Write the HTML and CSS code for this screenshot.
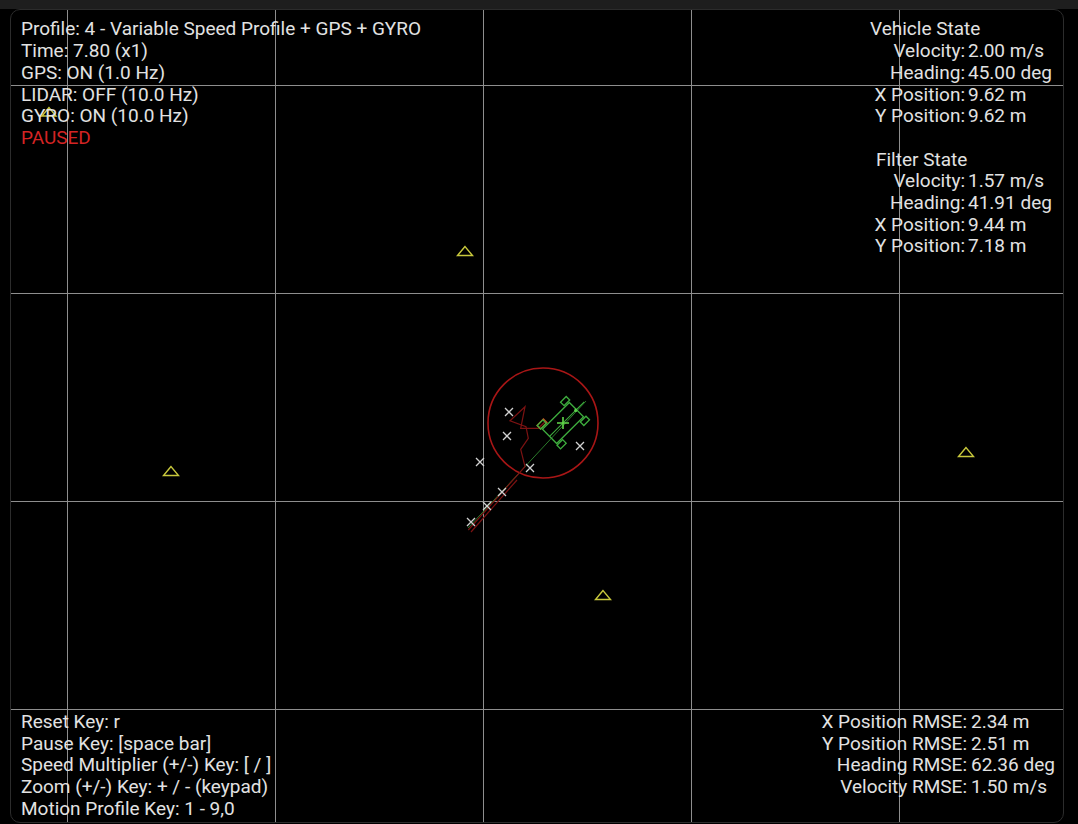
FILE: index.html
```html
<!DOCTYPE html>
<html>
<head>
<meta charset="utf-8">
<link rel="stylesheet" href="styles.css">
</head>
<body>
<div class="topbar"></div>
<div class="panel">
  <svg class="scene" width="1078" height="824" viewBox="0 0 1078 824">
    <g class="grid">
      <line x1="67.5" y1="0" x2="67.5" y2="824"/>
      <line x1="275.5" y1="0" x2="275.5" y2="824"/>
      <line x1="483.5" y1="0" x2="483.5" y2="824"/>
      <line x1="691.5" y1="0" x2="691.5" y2="824"/>
      <line x1="899.5" y1="0" x2="899.5" y2="824"/>
      <line x1="0" y1="85.5" x2="1078" y2="85.5"/>
      <line x1="0" y1="293.5" x2="1078" y2="293.5"/>
      <line x1="0" y1="501.5" x2="1078" y2="501.5"/>
      <line x1="0" y1="709.5" x2="1078" y2="709.5"/>
    </g>
    <g class="landmarks">
      <polygon points="49,107.5 42,116 56,116"/>
      <polygon points="465,246.5 457.5,255.5 472.5,255.5"/>
      <polygon points="171,466.5 163.5,475.5 178.5,475.5"/>
      <polygon points="966,447.5 958.5,456.5 973.5,456.5"/>
      <polygon points="603,590.5 595.5,599.5 610.5,599.5"/>
    </g>
    <circle class="uncert" cx="543" cy="423" r="55"/>
    <line class="path-green" x1="468" y1="528" x2="586" y2="401"/>
    <polyline class="path-red" points="468.3,530 525,466.7 520.7,449.3 528.3,438.3 526,426.7 510,420.7 525,406.7 520.7,428.3 538.3,428.3 545,421.7"/>
    <polyline class="path-red" points="471,532 517,480"/>
    <g class="gps">
      <path d="M505,408 l8,8 M513,408 l-8,8"/>
      <path d="M503,432 l8,8 M511,432 l-8,8"/>
      <path d="M476,458 l8,8 M484,458 l-8,8"/>
      <path d="M526,464 l8,8 M534,464 l-8,8"/>
      <path d="M576,442 l8,8 M584,442 l-8,8"/>
      <path d="M498,488 l8,8 M506,488 l-8,8"/>
      <path d="M483,502 l8,8 M491,502 l-8,8"/>
      <path d="M467,518 l8,8 M475,518 l-8,8"/>
    </g>
    <g transform="translate(542,424) rotate(-45)">
      <rect class="filter-car" x="-4.5" y="-2.5" width="9" height="5"/>
    </g>
    <g class="car" transform="translate(563,423) rotate(-45)">
      <rect x="-19" y="-10" width="38" height="20"/>
      <rect x="13" y="-16.5" width="8" height="5"/>
      <rect x="13" y="11.5" width="8" height="5"/>
      <rect x="-20" y="-16.5" width="8" height="5"/>
      <rect x="-20" y="11.5" width="8" height="5"/>
      <line class="axis" x1="-19" y1="0" x2="30" y2="0"/>
      <circle class="dot" cx="18" cy="0" r="1.6"/>
    </g>
    <path class="cross" d="M557,423 h12 M563,417 v12"/>
  </svg>

  <div class="overlay">
    <div class="row top">
      <div class="info">
        <div>Profile: 4 - Variable Speed Profile + GPS + GYRO</div>
        <div>Time: 7.80 (x1)</div>
        <div>GPS: ON (1.0 Hz)</div>
        <div>LIDAR: OFF (10.0 Hz)</div>
        <div>GYRO: ON (10.0 Hz)</div>
        <div class="paused">PAUSED</div>
      </div>
      <div class="state">
        <div class="head">Vehicle State</div>
        <div class="lbl">Velocity:</div><div class="val">2.00 m/s</div>
        <div class="lbl">Heading:</div><div class="val">45.00 deg</div>
        <div class="lbl">X Position:</div><div class="val">9.62 m</div>
        <div class="lbl">Y Position:</div><div class="val">9.62 m</div>
        <div class="head gap">Filter State</div>
        <div class="lbl">Velocity:</div><div class="val">1.57 m/s</div>
        <div class="lbl">Heading:</div><div class="val">41.91 deg</div>
        <div class="lbl">X Position:</div><div class="val">9.44 m</div>
        <div class="lbl">Y Position:</div><div class="val">7.18 m</div>
      </div>
    </div>
    <div class="row bottom">
      <div class="info">
        <div>Reset Key: r</div>
        <div>Pause Key: [space bar]</div>
        <div>Speed Multiplier (+/-) Key: [ / ]</div>
        <div>Zoom (+/-) Key: + / - (keypad)</div>
        <div>Motion Profile Key: 1 - 9,0</div>
      </div>
      <div class="rmse">
        <div class="lbl">X Position RMSE:</div><div class="val">2.34 m</div>
        <div class="lbl">Y Position RMSE:</div><div class="val">2.51 m</div>
        <div class="lbl">Heading RMSE:</div><div class="val">62.36 deg</div>
        <div class="lbl">Velocity RMSE:</div><div class="val">1.50 m/s</div>
      </div>
    </div>
  </div>
</div>
</body>
</html>
```

FILE: styles.css
```css
html, body {
  margin: 0;
  padding: 0;
  background: #000;
  width: 1078px;
  height: 824px;
  overflow: hidden;
}

.topbar {
  height: 9px;
  background: #1e1e1e;
}

.panel {
  position: relative;
  margin-left: 10px;
  width: 1052px;
  height: 812px;
  border: 1px solid #2c2c2c;
  border-radius: 10px;
  overflow: hidden;
  background: #000;
}

.scene {
  position: absolute;
  left: -11px;
  top: -10px;
  display: block;
}

.grid line {
  stroke: #8e8e8e;
  stroke-width: 1;
}

.landmarks polygon {
  fill: none;
  stroke: #c8c83c;
  stroke-width: 1.4;
  stroke-linejoin: miter;
}

.uncert {
  fill: none;
  stroke: #a81616;
  stroke-width: 1.6;
}

.path-green {
  stroke: #2a7a2a;
  stroke-width: 1;
}

.path-red {
  fill: none;
  stroke: #7c1212;
  stroke-width: 1.2;
}

.gps path {
  stroke: #d2d2d2;
  stroke-width: 1.3;
  fill: none;
}

.filter-car {
  fill: none;
  stroke: #c4501e;
  stroke-width: 1.4;
}

.car rect {
  fill: none;
  stroke: #3eae3e;
  stroke-width: 1.3;
}

.car .axis {
  stroke: #3eae3e;
  stroke-width: 1;
}

.car .dot {
  fill: #5ccf4c;
}

.cross {
  stroke: #62d84a;
  stroke-width: 1.6;
  fill: none;
}

.overlay {
  position: absolute;
  inset: 0;
  display: flex;
  flex-direction: column;
  justify-content: space-between;
  padding: 8.4px 5px 2.6px 10px;
  font-family: Roboto, "Liberation Sans", sans-serif;
  font-size: 19px;
  line-height: 21.7px;
  color: #e2e2e2;
}

.row {
  display: flex;
  justify-content: space-between;
  align-items: flex-start;
}

.paused {
  color: #d42424;
}

.state {
  display: grid;
  grid-template-columns: 95px 90px;
  column-gap: 3px;
}

.state .head {
  grid-column: 1 / 3;
}

.state .gap {
  margin-top: 21.7px;
  padding-left: 6px;
}

.lbl {
  text-align: right;
  white-space: nowrap;
}

.val {
  white-space: nowrap;
}

.rmse {
  display: grid;
  grid-template-columns: 150px 87px;
  column-gap: 4px;
}
```
